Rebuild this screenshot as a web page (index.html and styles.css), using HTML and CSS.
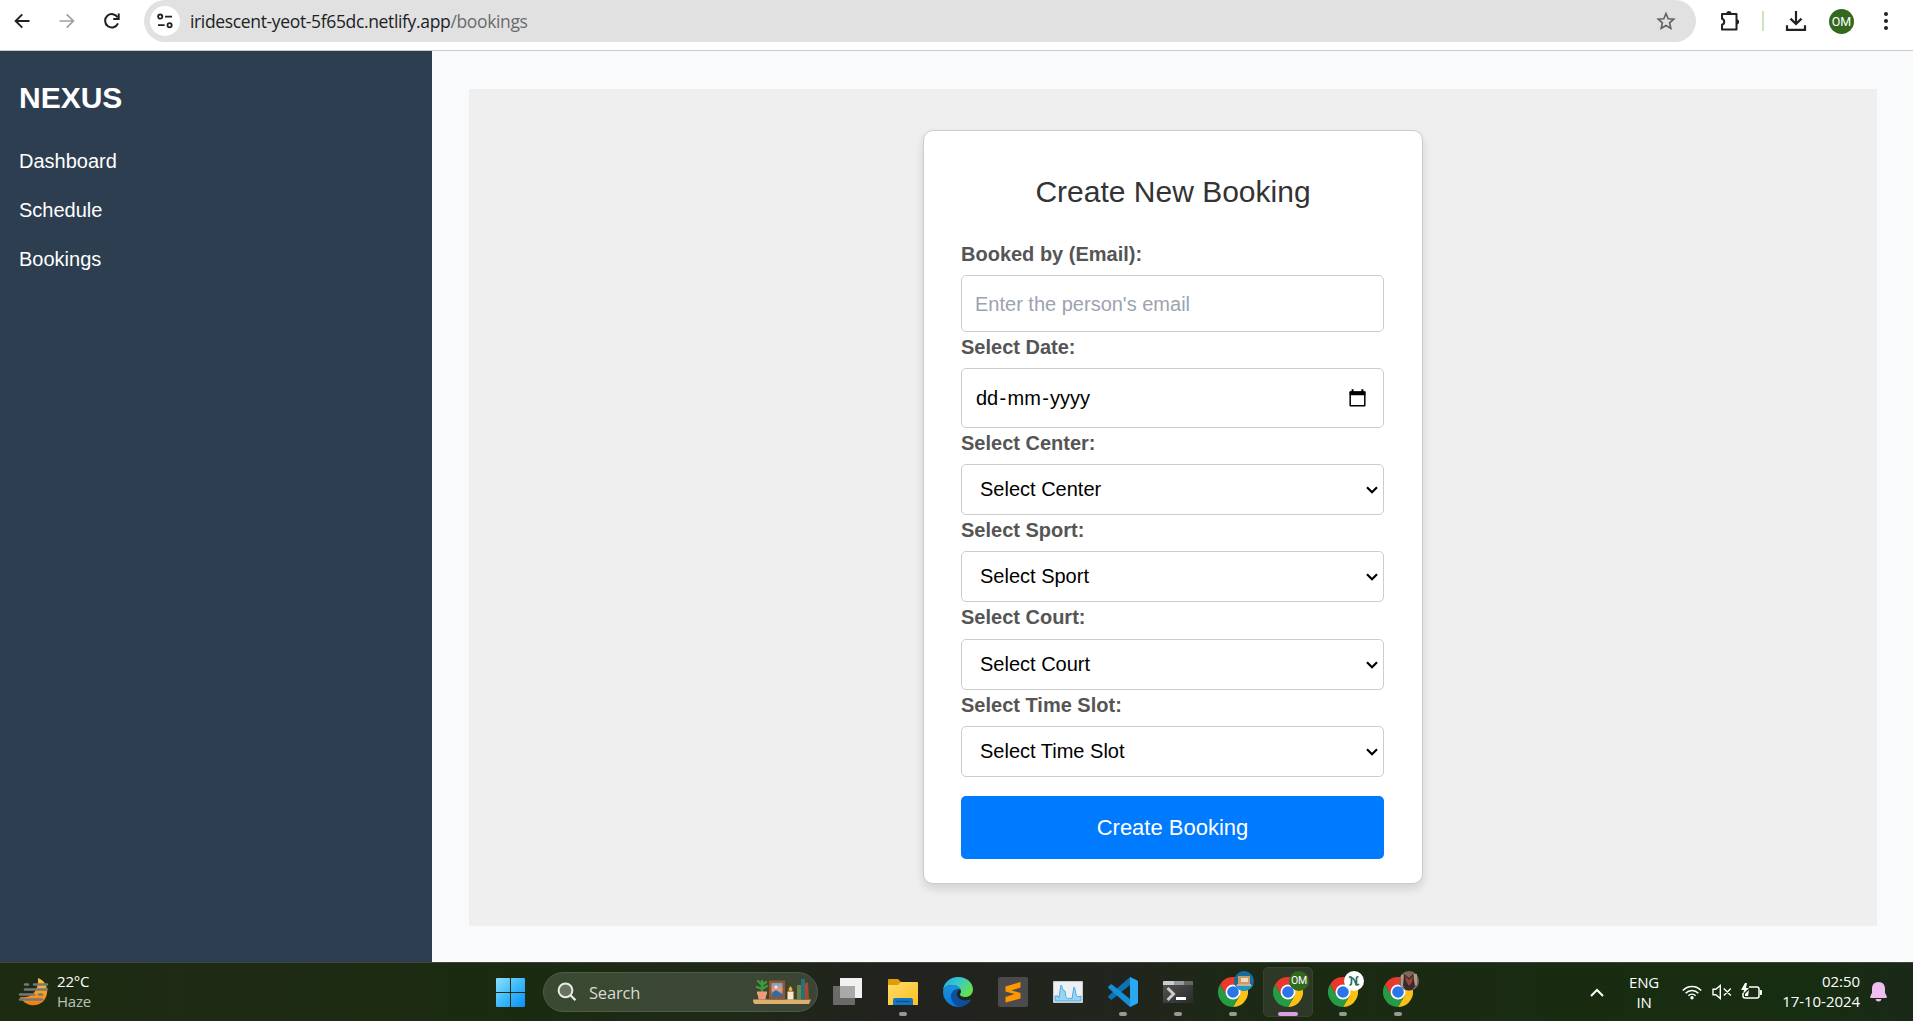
FILE: index.html
```html
<!DOCTYPE html>
<html lang="en">
<head>
<meta charset="utf-8">
<title>Bookings</title>
<link rel="stylesheet" href="styles.css">
</head>
<body>
<svg class="defs" width="0" height="0" aria-hidden="true">
  <defs>
    <linearGradient id="win" x1="0" y1="0" x2="1" y2="1"><stop offset="0" stop-color="#8fe0fd"/><stop offset=".5" stop-color="#3dbafa"/><stop offset="1" stop-color="#0a8ff5"/></linearGradient>
    <linearGradient id="moon" x1="0" y1="0" x2="0" y2="1"><stop offset="0" stop-color="#ffc83a"/><stop offset="1" stop-color="#f07c12"/></linearGradient>
    <linearGradient id="folder" x1="0" y1="0" x2="1" y2="1"><stop offset="0" stop-color="#ffdc6b"/><stop offset="1" stop-color="#fcbf20"/></linearGradient>
    <linearGradient id="edgeTop" x1="0" y1="0" x2="1" y2=".5"><stop offset="0" stop-color="#25a7e2"/><stop offset=".5" stop-color="#38c9cf"/><stop offset="1" stop-color="#62e04e"/></linearGradient>
    <linearGradient id="edgeLow" x1="0" y1="0" x2="0" y2="1"><stop offset="0" stop-color="#1b93dc"/><stop offset="1" stop-color="#0b78d8"/></linearGradient>
    <linearGradient id="pic" x1="0" y1="0" x2="0" y2="1"><stop offset="0" stop-color="#6aa6cf"/><stop offset=".5" stop-color="#e79a80"/><stop offset="1" stop-color="#3c7bb0"/></linearGradient>
    <linearGradient id="term" x1="0" y1="0" x2="1" y2="1"><stop offset="0" stop-color="#555"/><stop offset="1" stop-color="#2b2b2b"/></linearGradient>
    <symbol id="chrome" viewBox="0 0 30 30">
      <path d="M15 7.5H28A15 15 0 0 0 2 7.5L8.5 18.8Z" fill="#e8392c"/>
      <path d="M28 7.5A15 15 0 0 1 15 30L21.5 18.8 21.5 7.5Z" fill="#fdc014"/>
      <path d="M2 7.5A15 15 0 0 0 15 30L21.5 18.8 8.5 18.8Z" fill="#259b45"/>
      <circle cx="15" cy="15" r="7.5" fill="#fff"/><circle cx="15" cy="15" r="5.8" fill="#2a75e8"/>
    </symbol>
  </defs>
</svg>

<header class="browser">
  <div class="nav-icons">
    <svg width="16" height="16" viewBox="0 0 16 16" fill="none" stroke="#202124" stroke-width="1.9"><path d="M15.5 8H2M8.3 1.3 1.6 8l6.7 6.7"/></svg>
    <svg width="16" height="16" viewBox="0 0 16 16" fill="none" stroke="#a0a0a0" stroke-width="1.7"><path d="M.5 8H14M7.7 1.3 14.4 8l-6.7 6.7"/></svg>
    <svg width="16" height="16" viewBox="0 0 16 16" fill="none" stroke="#202124" stroke-width="2"><path d="M14 10.4A6.7 6.7 0 1 1 13.7 4.6"/><path d="M14.7.5V6H9.2"/></svg>
  </div>
  <div class="address">
    <span class="site-info">
      <svg width="16" height="16" viewBox="0 0 16 16" fill="none" stroke="#202124" stroke-width="1.8"><circle cx="3.2" cy="3.6" r="2.1"/><path d="M8 3.6h7M1 12.2h6.6"/><circle cx="12.6" cy="12.2" r="2.1"/></svg>
    </span>
    <span class="url">iridescent-yeot-5f65dc.netlify.app<span class="path">/bookings</span></span>
    <svg class="star" width="20" height="20" viewBox="0 0 20 20" fill="none" stroke="#5f6063" stroke-width="1.6"><path d="M10 2.5 12.2 7.7 17.8 8.2 13.6 11.9 14.8 17.4 10 14.5 5.2 17.4 6.4 11.9 2.2 8.2 7.8 7.7Z"/></svg>
  </div>
  <div class="tools">
    <svg width="22" height="22" viewBox="0 0 22 22"><path d="M3 4h14.5v15.5H3v-4.7a3.2 3.2 0 0 0 0-6.1Z" fill="none" stroke="#202124" stroke-width="2" stroke-linejoin="round"/><path d="M7.3 3.5a2.6 2.6 0 0 1 5.2 0ZM17.5 9.2a2.6 2.6 0 0 1 0 5.2Z" fill="#202124"/></svg>
    <i class="sep"></i>
    <svg width="22" height="22" viewBox="0 0 22 22" fill="none" stroke="#202124" stroke-width="2.2"><path d="M11 1v13M5.5 8.6 11 14l5.5-5.4M2 15.2v4.6h18v-4.6"/></svg>
    <span class="avatar">OM</span>
    <svg width="6" height="20" viewBox="0 0 6 20" fill="#202124"><circle cx="3" cy="3" r="2"/><circle cx="3" cy="10" r="2"/><circle cx="3" cy="17" r="2"/></svg>
  </div>
</header>

<div class="app">
  <nav class="sidebar">
    <h2 class="brand">NEXUS</h2>
    <a class="link">Dashboard</a>
    <a class="link">Schedule</a>
    <a class="link">Bookings</a>
  </nav>
  <main class="content">
    <section class="panel">
      <form class="card">
        <h1 class="title">Create New Booking</h1>
        <label class="label">Booked by (Email):</label>
        <input class="field email" type="email" placeholder="Enter the person's email">
        <label class="label">Select Date:</label>
        <div class="field date"><span>dd</span><span>-</span><span>mm</span><span>-</span><span>yyyy</span>
          <svg class="calendar" width="17" height="18" viewBox="0 0 17 18"><path d="M1.2 3.2h14.6v13.6H1.2Z" fill="none" stroke="#000" stroke-width="1.5" stroke-linejoin="round"/><path d="M.6 2.2h15.8v4H.6ZM2.6.2h2v3h-2ZM12.4.2h2v3h-2Z"/></svg>
        </div>
        <label class="label">Select Center:</label>
        <div class="field select"><span>Select Center</span><svg width="12" height="8" viewBox="0 0 12 8"><path d="m1 1.3 5 4.9 5-4.9" fill="none" stroke="#000" stroke-width="2.2"/></svg></div>
        <label class="label">Select Sport:</label>
        <div class="field select"><span>Select Sport</span><svg width="12" height="8" viewBox="0 0 12 8"><path d="m1 1.3 5 4.9 5-4.9" fill="none" stroke="#000" stroke-width="2.2"/></svg></div>
        <label class="label court-label">Select Court:</label>
        <div class="field select"><span>Select Court</span><svg width="12" height="8" viewBox="0 0 12 8"><path d="m1 1.3 5 4.9 5-4.9" fill="none" stroke="#000" stroke-width="2.2"/></svg></div>
        <label class="label">Select Time Slot:</label>
        <div class="field select"><span>Select Time Slot</span><svg width="12" height="8" viewBox="0 0 12 8"><path d="m1 1.3 5 4.9 5-4.9" fill="none" stroke="#000" stroke-width="2.2"/></svg></div>
        <button class="submit" type="button">Create Booking</button>
      </form>
    </section>
  </main>
</div>

<footer class="taskbar">
  <div class="weather">
    <svg width="32" height="30" viewBox="0 0 32 30"><path d="M20 1C28 4 31 12 28 20 24 30 9 32 2 20 13 22 21 14 20 1Z" fill="url(#moon)"/><path d="M7 7.500h3M16 7.500h13M7 12.500h22M2 17.500h14M21 17.500h3M2 22.500h22" stroke="#77777a" stroke-width="2.500" stroke-linecap="round"/></svg>
    <div class="weather-text"><span>22°C</span><span class="dim">Haze</span></div>
  </div>
  <div class="apps">
    <svg class="start" width="29" height="29" viewBox="0 0 29 29" fill="url(#win)"><path d="M1 0H14V14H0V1Q0 0 1 0ZM15 0H28Q29 0 29 1V14H15ZM0 15H14V29H1Q0 29 0 28ZM15 15H29V28Q29 29 28 29H15Z"/></svg>
    <div class="search">
      <svg width="20" height="20" viewBox="0 0 20 20"><circle cx="8.5" cy="8.3" r="6.9" fill="#687263" stroke="#e8ebe7" stroke-width="2"/><path d="m13.5 13.3 5 5" stroke="#e8ebe7" stroke-width="2.3"/></svg>
      <span>Search</span>
      <svg class="shelf" width="60" height="28" viewBox="0 0 60 28">
        <path d="M1 21.5h58l-2 4.5H3Q1 25.500 1 21.500Z" fill="#dcb06e"/>
        <path d="M10 13V3M10 7 6 3M10 7l4-3M10 11 5 9M10 11l5-3" stroke="#3d9b3c" stroke-width="2.4" stroke-linecap="round"/>
        <path d="M5 13.500h10v3h-.7L13.500 21.500h-7L5.700 16.500H5Z" fill="#ef9a78"/>
        <path d="M17 2.500h16v19H17Z" fill="#94552f"/><path d="M19.500 5h11v14h-11Z" fill="url(#pic)"/><circle cx="24" cy="9" r="1.600" fill="#ffe6cc"/><path d="m20 15 4-3 7 5v2H20Z" fill="#346b9c"/>
        <path d="M35.500 13.500h6v8h-6Z" fill="#fae7ca"/><path d="M38.500 8q4 5 0 5t0-5Z" fill="#ffad26"/>
        <path d="M45 7h4v14.500h-4Z" fill="#688348"/><path d="M49 1h4v20.500h-4Z" fill="#25717b"/><path d="m52.500 5 3.500-.5 1 17h-4Z" fill="#a24b2d"/>
      </svg>
    </div>
    <div class="tile"><svg width="30" height="30" viewBox="0 0 30 30"><path d="M7 1h22v20H7Z" fill="#f1f1f1"/><path d="M0 9h22v19H0Z" fill="#6a6b69"/><path d="M7 9h15v12H7Z" fill="#a9a9a8"/></svg></div>
    <div class="tile run"><svg width="30" height="30" viewBox="0 0 30 30"><path d="M0 3q0-1 1-1h9l3 3v6H0Z" fill="#dc9e09"/><path d="M0 8h10l3-3h16q1 0 1 1v22H0Z" fill="url(#folder)"/><path d="M5 28v-5q0-2 2-2h16q2 0 2 2v5Z" fill="#1375c3"/><path d="M8.500 24.500h13" stroke="#0b4d91" stroke-width="1.200"/></svg></div>
    <div class="tile"><svg width="30" height="30" viewBox="0 0 30 30"><path d="M0 14C0 6 7 0 15 0c9 0 15 6 15 12.500 0 5-4 7.500-8 7.500-3 0-5-1-5-2.500 0-1 1-1.500 1-3C18 11 14 8 9.500 8 4 8 0 11 0 14Z" fill="url(#edgeTop)"/><path d="M0 15C0 11 4 8 9.500 8c4 0 7.500 2 8 4.500-3-1-7 1-7 6 0 6 5 10.500 10 10.200A15 15 0 0 1 0 15Z" fill="url(#edgeLow)"/><path d="M16 12.500c-4-1.500-8 2-8 7 0 6 5 10.500 10 10.200 4-.7 7.500-3 9.500-6.200q.7-1.500-.8-1C20 25.500 13 21 14 16q.5-2 2-3.500Z" fill="#0d4f9f"/></svg></div>
    <div class="tile"><svg width="30" height="30" viewBox="0 0 30 30"><rect width="30" height="30" rx="2.500" fill="#4b4b4d"/><path d="M22.500 5v5.500L13.500 13.500 22.500 16v5.500L7.500 25.500V20L16.500 17 7.500 14.500V9.500Z" fill="#ff9800"/></svg></div>
    <div class="tile"><svg width="30" height="30" viewBox="0 0 30 30"><path d="M.5 4.500h29v21H.5Z" fill="#eaf0f4" stroke="#c7cbce"/><path d="M2 19h3l1 2 1-7 1-6 1 2 1 3 2 1 1 6 2 2 2-1 2 1 1-7 1-5 1 2 1 6 2 2 3-1v5H2Z" fill="#9ad4f4" stroke="#4da4d8" stroke-width=".9"/></svg></div>
    <div class="tile run"><svg width="30" height="30" viewBox="0 0 30 30"><path d="M22 0v8L4 22.500Q2.800 23 2 22L.4 20.500Q-.2 19.500.6 18.700Z" fill="#0b72b8"/><path d="M22 30v-8L4 7.500Q2.800 7 2 8L.4 9.500Q-.2 10.500.6 11.300Z" fill="#168ed8"/><path d="m22 0 7 3.200q1 .6 1 1.800v20q0 1.200-1 1.800L22 30Z" fill="#2aa8f2"/></svg></div>
    <div class="tile run"><svg width="30" height="30" viewBox="0 0 30 30"><path d="M0 5q0-1 1-1h28q1 0 1 1v20q0 1-1 1H1q-1 0-1-1Z" fill="url(#term)"/><path d="M1 4h10v4H0V5q0-1 1-1Z" fill="#ccc"/><path d="M11 4h10v4H11Z" fill="#999"/><path d="M21 4h8q1 0 1 1v3h-9Z" fill="#666"/><path d="m4.500 11 6 6-6 6" fill="none" stroke="#ccc" stroke-width="3"/><path d="M13 20h10v3H13Z" fill="#fff"/></svg></div>
    <div class="tile run"><svg width="30" height="30"><use href="#chrome"/></svg><span class="badge"><svg width="20" height="20" viewBox="0 0 20 20"><circle cx="10" cy="10" r="10" fill="#176c9b"/><path d="M1 14h18A10 10 0 0 1 1 14Z" fill="#1b9ad2"/><path d="M4 5h12v9H4Z" fill="#c99a6a"/><path d="M7 7h7v4H7Z" fill="#eadbc3"/><path d="M3 14h14" stroke="#d7b087" stroke-width="2"/></svg></span></div>
    <div class="tile run active"><svg width="30" height="30"><use href="#chrome"/></svg><span class="badge om">OM</span></div>
    <div class="tile run"><svg width="30" height="30"><use href="#chrome"/></svg><span class="badge"><svg width="20" height="20" viewBox="0 0 20 20"><circle cx="10" cy="10" r="10" fill="#fff"/><path d="M5 6.500q2.500-1.500 2.500 1v4q0 2.500-2 2.500M7.500 6.500q3 1 4.500 7 1.500 1 3-.5M12.500 13V7.500q0-2 2-1.500" fill="none" stroke="#2a6f65" stroke-width="1.700"/></svg></span></div>
    <div class="tile run"><svg width="30" height="30"><use href="#chrome"/></svg><span class="badge"><svg width="20" height="20" viewBox="0 0 20 20"><circle cx="10" cy="10" r="10" fill="#806757"/><path d="M2 4h4v12H2ZM15 3h3v11h-3Z" fill="#b19a85"/><path d="m5 3 5 4 4-4 2 12-3 4H7L4 15Z" fill="#332d32"/><path d="m6 5 4 4 4-4-1 6-3 4-3-5Z" fill="#a5422d"/></svg></span></div>
  </div>
  <div class="tray">
    <svg class="chev" width="14" height="9" viewBox="0 0 14 9"><path d="M1 8l6-6 6 6" fill="none" stroke="#fff" stroke-width="2"/></svg>
    <div class="lang"><span>ENG</span><span>IN</span></div>
    <svg class="wifi" width="20" height="16" viewBox="0 0 20 16" fill="none" stroke="#fff" stroke-width="1.500"><path d="M.8 6.500a12.500 12.500 0 0 1 18.400 0M3.600 9.200a8.800 8.800 0 0 1 12.800 0M6.400 11.800a5.200 5.200 0 0 1 7.200 0"/><circle cx="10" cy="13.700" r="1.700" fill="#fff" stroke="none"/></svg>
    <svg class="sound" width="20" height="16" viewBox="0 0 20 16" fill="none" stroke="#fff" stroke-width="1.400"><path d="M1 5.200h2.800L8.300 1.500v13L3.800 10.800H1ZM11.800 4.500l7 7M18.800 4.500l-7 7"/></svg>
    <svg class="battery" width="22" height="18" viewBox="0 0 22 18"><path d="M8 4h8q2 0 2 2v7q0 2-2 2H4q-2 0-2-2v-3" fill="none" stroke="#fff" stroke-width="1.500"/><path d="M19 7h1q1 0 1 1v3q0 1-1 1h-1ZM4 0 0 7h3L2 11 8 5H5L6 0ZM4 11l4-4-1 6H4Z" fill="#fff"/></svg>
    <div class="clock"><span>02:50</span><span>17-10-2024</span></div>
    <svg class="bell" width="17" height="20" viewBox="0 0 17 20" fill="#efbdf0"><path d="M8.500 0C4.500 0 2 2.800 2 6.500v4.200L.2 14.500Q0 16 1 16h15q1 0 .8-1.500L15 10.700V6.500C15 2.800 12.500 0 8.500 0ZM5.500 17h6q-.5 2.500-3 2.500t-3-2.500Z"/></svg>
  </div>
</footer>
</body>
</html>
```
FILE: styles.css
```css
* { box-sizing: border-box; }
body {
  margin: 0;
  width: 1913px;
  height: 1021px;
  overflow: hidden;
  display: flex;
  flex-direction: column;
  font-family: "Liberation Sans", Arial, sans-serif;
  font-size: 20px;
}
svg { display: block; flex: none; }
.defs { position: absolute; }

/* Browser toolbar */
.browser {
  height: 51px;
  flex: none;
  display: flex;
  background: #fff;
  border-bottom: 1px solid #c8cac8;
}
.nav-icons { width: 144px; height: 42px; padding-left: 14px; display: flex; align-items: center; gap: 29px; }
.address { width: 1552px; height: 42px; border-radius: 21px; background: #e1e1e1; display: flex; align-items: center; padding: 0 20px 0 6px; }
.site-info { width: 30px; height: 30px; border-radius: 50%; background: #fff; display: flex; align-items: center; justify-content: center; }
.url { margin-left: 10px; font-family: "Open Sans", "Noto Sans", sans-serif; font-size: 17.5px; letter-spacing: -0.35px; line-height: 42px; color: #202124; white-space: nowrap; }
.path { color: #6a6b6d; }
.star { margin-left: auto; }
.tools { height: 42px; display: flex; align-items: center; padding-left: 23px; }
.sep { width: 2px; height: 20px; margin: 0 21px 0 21px; background: #c6e7bd; }
.avatar { width: 25px; height: 25px; margin: 0 29px 0 22px; border-radius: 50%; background: #33691e; color: #fff; font: 12.5px/25px Roboto, sans-serif; text-align: center; }

/* Application */
.app { height: 911px; flex: none; display: flex; background: #f8fafc; }
.sidebar { width: 432px; background: #2c3e50; color: #fff; padding: 27px 19px; }
.brand { margin: 0 0 16px; font-size: 30px; line-height: 40px; }
.link { display: block; height: 49px; line-height: 55px; }
.content { flex: 1; padding: 38px 36px 36px 37px; }
.panel { height: 837px; background: #efefef; padding-top: 41px; }
.card {
  width: 500px;
  height: 754px;
  margin: 0 auto;
  padding: 37px 37px 24px;
  display: flex;
  flex-direction: column;
  background: #fff;
  border: 1px solid #ccc;
  border-radius: 10px;
  box-shadow: 0 5px 10px rgba(0, 0, 0, .12);
}
.card > * { flex: none; }
.title { margin: 0 0 26px; height: 45px; font-size: 30px; line-height: 48px; font-weight: 400; color: #333; text-align: center; }
.label { height: 36px; line-height: 31px; font-weight: 700; color: #555; }
.court-label { height: 37px; }
.field { width: 423px; border: 1px solid #ccc; border-radius: 5px; background: #fff; font: 20px "Liberation Sans", Arial, sans-serif; color: #000; }
.email { height: 57px; padding: 1px 13px 0; }
.email::placeholder { color: #9ca3af; }
.date { height: 60px; padding: 0 17px 0 14px; display: flex; align-items: center; gap: 1.3px; }
.calendar { margin-left: auto; }
.select { height: 51px; padding: 0 5px 0 18px; display: flex; align-items: center; justify-content: space-between; }
.submit { width: 423px; height: 63px; margin-top: 19px; border: 0; border-radius: 5px; background: #007bff; color: #fff; font: 22px "Liberation Sans", Arial, sans-serif; }

/* Taskbar */
.taskbar {
  height: 59px;
  flex: none;
  display: flex;
  border-top: 1px solid #41453b;
  background: linear-gradient(90deg, #1c2b12 0, #1f2a14 12%, #1a2b11 26%, #1e2818 39%, #22231e 46%, #22241e 58%, #1c2914 65%, #182c11 85%, #172d12 95%, #1a2918 100%);
  font-family: "Open Sans", "Noto Sans", sans-serif;
  font-size: 15px;
  letter-spacing: -0.2px;
  color: #fff;
}
.weather { width: 496px; padding-left: 18px; display: flex; align-items: center; gap: 7px; }
.weather-text, .lang, .clock { display: flex; flex-direction: column; line-height: 20px; }
.weather-text, .clock { margin-bottom: 2px; }
.dim { color: #bcc1b8; }
.apps { width: 1094px; display: flex; align-items: center; }
.start { margin-right: 18px; }
.search { width: 275px; height: 40px; margin-right: 5px; padding: 0 5px 0 13px; border: 1px solid #4f5a47; border-radius: 20px; background: linear-gradient(90deg, #3a4931, #3c4535); display: flex; align-items: center; font-size: 16.5px; color: #d7dbd4; }
.search span { margin-left: 12px; }
.shelf { margin-left: auto; }
.tile { position: relative; width: 50px; height: 50px; margin-right: 5px; display: flex; align-items: center; justify-content: center; border-radius: 5px; }
.active { background: #2d3826; border: 1px solid #39432f; }
.run::after { content: ""; position: absolute; bottom: 1px; left: 21px; width: 8px; height: 4px; border-radius: 2px; background: #979a94; }
.active::after { left: 14px; bottom: 0; width: 20px; background: #dc9ee2; }
.badge { position: absolute; left: 26px; top: 4px; width: 20px; height: 20px; border-radius: 50%; }
.active .badge { left: 25px; top: 3px; }
.om { background: #33691e; color: #fff; font: 10.5px/20px Roboto, sans-serif; text-align: center; }
.tray { display: flex; align-items: center; }
.lang { width: 40px; margin-left: 20px; text-align: center; }
.wifi { margin-left: 18px; }
.sound { margin-left: 10px; }
.battery { margin-left: 9px; }
.clock { width: 97px; text-align: right; letter-spacing: -0.05px; }
.bell { margin-left: 10px; }
```
